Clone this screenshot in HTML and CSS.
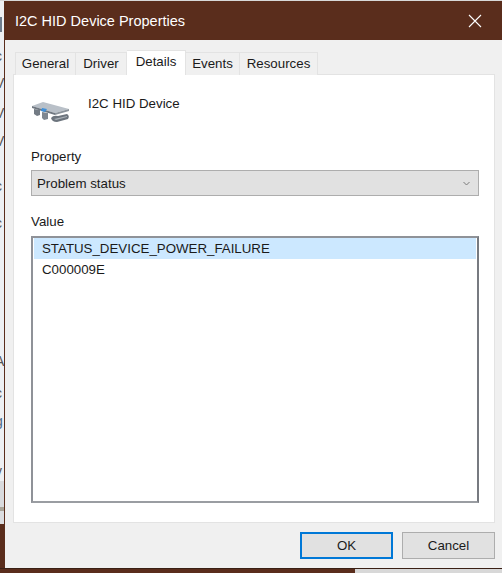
FILE: index.html
```html
<!DOCTYPE html>
<html lang="en">
<head>
    <meta charset="UTF-8">
    <title>I2C HID Device Properties</title>
    <link rel="stylesheet" href="styles.css">
</head>
<body>
    <div class="screen">
        <div class="behind">
            <div class="behind-mark"></div>
            <span class="frag gap-14">c</span>
            <span class="frag gap-7">V</span>
            <span class="frag gap-10">V</span>
            <span class="frag gap-8">V</span>
            <span class="frag gap-25">c</span>
            <span class="frag gap-17">c</span>
            <span class="frag gap-36">r</span>
            <span class="frag gap-62">A</span>
            <span class="frag gap-12">c</span>
            <span class="frag gap-8 frag-blue">g</span>
            <span class="frag gap-7 frag-blue">(</span>
            <span class="frag gap-3">v</span>
            <div class="behind-gray"></div>
        </div>
        <div class="dialog">
            <div class="titlebar">
                <span>I2C HID Device Properties</span>
                <svg class="close" width="14" height="14" viewBox="0 0 14 14">
                    <path d="M1 1 L13 13 M13 1 L1 13" stroke="#fff" stroke-width="1.1" fill="none"/>
                </svg>
            </div>
            <div class="body">
                <div class="tabs">
                    <div class="tab tab-general">General</div>
                    <div class="tab tab-driver">Driver</div>
                    <div class="tab tab-details">Details</div>
                    <div class="tab tab-events">Events</div>
                    <div class="tab tab-resources">Resources</div>
                </div>
                <div class="panel">
                    <div class="device">
                        <svg class="device-icon" width="39" height="22" viewBox="0 0 39 22">
                            <path d="M1 5 L12 1 L38 8 L24 12 Z" fill="#b9c0c8"/>
                            <path d="M1 5 L24 12 L24 14 L1 7 Z" fill="#6f7780"/>
                            <path d="M24 12 L38 8 L38 10 L24 14 Z" fill="#8b939b"/>
                            <path d="M3 8 L9 9 L9 14 L6 15 L3 13 Z" fill="#737b84"/>
                            <path d="M11 11 L17 12 L17 18 L13 19 L11 17 Z" fill="#7f8790"/>
                            <path d="M20 17 Q22 14 27 15 L36 13 Q39 15 37 18 L26 21 Q21 21 20 17 Z" fill="#6c747d"/>
                            <path d="M23 18 L36 15 L36 16 L25 19 Z" fill="#aab1b8"/>
                            <path d="M11 7 L16 8 L14 11 L10 10 Z" fill="#3f8fd8"/>
                        </svg>
                        <span class="device-name">I2C HID Device</span>
                    </div>
                    <div class="label label-property">Property</div>
                    <div class="combo">
                        <span>Problem status</span>
                        <svg width="7" height="5" viewBox="0 0 7 5">
                            <path d="M0.5 1 L3.5 4 L6.5 1" stroke="#7a7a7a" stroke-width="1" fill="none"/>
                        </svg>
                    </div>
                    <div class="label label-value">Value</div>
                    <div class="listbox">
                        <div class="row row-selected">STATUS_DEVICE_POWER_FAILURE</div>
                        <div class="row">C000009E</div>
                    </div>
                </div>
                <div class="buttons">
                    <div class="btn btn-ok">OK</div>
                    <div class="btn">Cancel</div>
                </div>
            </div>
        </div>
    </div>
    <div class="taskbar">
        <div class="taskbar-brown"></div>
    </div>
</body>
</html>
```

FILE: styles.css
```css
html, body {
    margin: 0;
    padding: 0;
}
body {
    width: 502px;
    height: 573px;
    overflow: hidden;
    background-color: #5a2d1c;
    font-family: "Liberation Sans", Arial, sans-serif;
    font-size: 13.3px;
    color: #1a1a1a;
}
.screen {
    display: flex;
    height: 568px;
    padding-top: 1px;
    box-sizing: border-box;
    background: linear-gradient(#d8d8d8 1px, transparent 1px);
}
/* window behind the dialog */
.behind {
    width: 4px;
    height: 523px;
    overflow: hidden;
    display: flex;
    flex-direction: column;
    background-color: #eef0f3;
    color: #555;
    flex-shrink: 0;
}
.behind-mark {
    width: 2px;
    height: 15px;
    margin-top: 16px;
    background-color: #6d7c8c;
    flex-shrink: 0;
}
.behind-gray {
    flex: 1;
    margin-top: 0;
    background: linear-gradient(#d9dadd 26px, #a9a498 26px, #a9a498 30px, #dcdde0 30px);
}
.frag {
    margin-left: -5px;
    height: 20px;
    line-height: 20px;
    font-size: 14px;
    flex-shrink: 0;
}
.frag-blue {
    color: #4a6a88;
}
.gap-3 { margin-top: 3px; }
.gap-7 { margin-top: 7px; }
.gap-8 { margin-top: 8px; }
.gap-10 { margin-top: 10px; }
.gap-12 { margin-top: 12px; }
.gap-14 { margin-top: 14px; }
.gap-17 { margin-top: 17px; }
.gap-25 { margin-top: 25px; }
.gap-36 { margin-top: 36px; }
.gap-62 { margin-top: 62px; }
.dialog {
    flex: 1;
    display: flex;
    flex-direction: column;
    border-left: 1px solid #5a2d1c;
    background-color: #f0f0f0;
}
.titlebar {
    height: 39px;
    flex-shrink: 0;
    box-sizing: border-box;
    padding: 0 20px 0 10px;
    display: flex;
    align-items: center;
    justify-content: space-between;
    background-color: #5a2d1c;
    color: #fff;
    font-size: 14.5px;
}
.body {
    flex: 1;
    display: flex;
    flex-direction: column;
    padding: 10px 7px 0 8px;
}
.tabs {
    display: flex;
    align-items: flex-end;
    height: 25px;
    padding-left: 2px;
    position: relative;
    z-index: 1;
    margin-bottom: -1px;
}
.tab {
    box-sizing: border-box;
    height: 23px;
    line-height: 22px;
    text-align: center;
    background-color: #f0f0f0;
    border: 1px solid #e3e3e3;
    border-bottom: none;
    border-left: none;
}
.tab-general { width: 61px; border-left: 1px solid #e3e3e3; }
.tab-driver { width: 51px; }
.tab-details { width: 59px; height: 25px; background-color: #fff; line-height: 21px; }
.tab-events { width: 54px; }
.tab-resources { width: 78px; }
.panel {
    height: 449px;
    box-sizing: border-box;
    background-color: #fff;
    border: 1px solid #e3e3e3;
    padding: 0 15px 0 17px;
    display: flex;
    flex-direction: column;
}
.device {
    display: flex;
    align-items: flex-start;
    height: 62px;
    padding-top: 20px;
    box-sizing: border-box;
}
.device-icon {
    margin: 6px 18px 0 0;
}
.device-name {
    line-height: 18px;
}
.label {
    line-height: 18px;
}
.label-property {
    margin-top: 11px;
}
.label-value {
    margin-top: 17px;
}
.combo {
    margin-top: 4px;
    height: 26px;
    box-sizing: border-box;
    background-color: #e1e1e1;
    border: 1px solid #adadad;
    padding: 0 8px 0 5px;
    display: flex;
    align-items: center;
    justify-content: space-between;
}
.listbox {
    margin-top: 5px;
    height: 267px;
    box-sizing: border-box;
    border: 2px solid #8f9298;
    border-right-color: #777a80;
    border-bottom-color: #9a9da2;
    padding: 0 1px;
}
.row {
    height: 21px;
    line-height: 21px;
    padding-left: 8px;
}
.row-selected {
    background-color: #cce8ff;
}
.buttons {
    display: flex;
    justify-content: flex-end;
    gap: 9px;
    margin-top: 9px;
}
.btn {
    width: 93px;
    height: 27px;
    box-sizing: border-box;
    line-height: 25px;
    text-align: center;
    background-color: #e1e1e1;
    border: 1px solid #adadad;
}
.btn-ok {
    border: 2px solid #0078d7;
    line-height: 23px;
}
.taskbar {
    height: 5px;
    display: flex;
    border-top: 1px solid #3a2015;
    box-sizing: border-box;
    background-color: #d8d8d8;
}
.taskbar-brown {
    width: 355px;
    background-color: #5a2d1c;
}
```
